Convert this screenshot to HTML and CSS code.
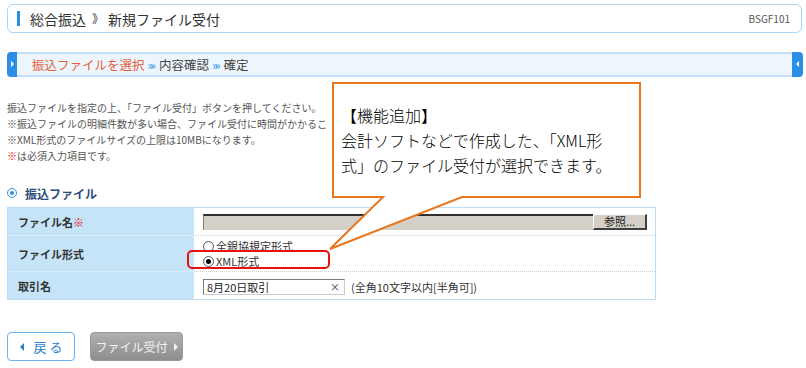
FILE: index.html
```html
<!DOCTYPE html>
<html lang="ja">
<head>
    <meta charset="UTF-8">
    <title>総合振込 新規ファイル受付</title>
    <link rel="stylesheet" href="styles.css">
</head>
<body>
    <div id="page">
        <div class="header">
            <h1><span class="bar"></span>総合振込<span class="sep">》</span>新規ファイル受付</h1>
            <span class="code">BSGF101</span>
        </div>
        <div class="steps">
            <span class="tabL"></span>
            <div class="stepMain">
                <span class="cur">振込ファイルを選択</span><span class="arr">»»</span><span>内容確認</span><span class="arr">»»</span><span>確定</span>
            </div>
            <span class="tabR"></span>
        </div>
        <div class="desc">
            <p>振込ファイルを指定の上、「ファイル受付」ボタンを押してください。</p>
            <p>※振込ファイルの明細件数が多い場合、ファイル受付に時間がかかるこ</p>
            <p>※XML形式のファイルサイズの上限は10MBになります。</p>
            <p><span class="req">※</span>は必須入力項目です。</p>
        </div>
        <h2 class="sec"><span class="secIcon"></span>振込ファイル</h2>
        <table class="form">
            <tr class="r1">
                <th>ファイル名<span class="req">※</span></th>
                <td>
                    <div class="fileBox"><span class="fileField"></span><span class="fileBtn">参照...</span></div>
                </td>
            </tr>
            <tr class="r2">
                <th>ファイル形式</th>
                <td>
                    <div class="radio"><span class="rb"></span>全銀協規定形式</div>
                    <div class="radio"><span class="rb on"></span>XML形式</div>
                </td>
            </tr>
            <tr class="r3">
                <th>取引名</th>
                <td>
                    <span class="textBox">8月20日取引<span class="clr">×</span></span><span class="note">(全角10文字以内[半角可])</span>
                </td>
            </tr>
        </table>
        <div class="btns">
            <a class="back" href="javascript:;"><span class="triL"></span>戻 る</a>
            <a class="submit" href="javascript:;">ファイル受付<span class="triR"></span></a>
        </div>

        <!-- 吹き出し -->
        <div class="mark"></div>
        <svg class="balloon" width="806" height="368" viewBox="0 0 806 368">
            <polygon points="333,83 640,83 640,197 462,197 330,249 383,197 333,197" fill="#fff" stroke="#e8771f" stroke-width="2" stroke-linejoin="miter"/>
        </svg>
        <div class="balloonText">【機能追加】<br>会計ソフトなどで作成した、「XML形<br>式」のファイル受付が選択できます。</div>
    </div>
</body>
</html>
```
FILE: styles.css
```css
body,div,h1,h2,p,table,th,td,span,a{margin: 0; padding: 0;}
a{text-decoration: none;}
body{background-color: #fff; font-family: "Noto Sans CJK JP", sans-serif; color: #333;}
#page{position: relative; width: 806px; height: 368px; overflow: hidden;}
.header{margin: 4px 4px 0 7px; height: 27px; border: 1px solid #a9d5f6; border-radius: 6px; display: flex; align-items: center; justify-content: space-between; padding: 0 11px 0 9px;}
.header h1{display: flex; align-items: center; font-size: 14px; font-weight: normal; color: #333;}
.header h1 .bar{width: 3px; height: 15px; background-color: #2b8fe3; margin-right: 10px;}
.header h1 .sep{margin: 0 4px 0 6px; font-size: 12px;}
.header .code{font-size: 10px; color: #555;}
.steps{display: flex; margin: 19px 3px 0 7px; height: 25px;}
.steps .tabL,.steps .tabR{width: 10px; background-color: #2b8de3; position: relative;}
.steps .tabL{border-radius: 4px 0 0 4px;}
.steps .tabR{width: 11px; border-radius: 0 4px 4px 0;}
.steps .tabL:after,.steps .tabR:after{content: ""; position: absolute; top: 9px; width: 0; height: 0; border-top: 3px solid transparent; border-bottom: 3px solid transparent;}
.steps .tabL:after{left: 4px; border-left: 3px solid #fff;}
.steps .tabR:after{left: 4px; border-right: 3px solid #fff;}
.steps .stepMain{flex: 1; display: flex; align-items: center; background-color: #eef6fd; border-top: 2px solid #c3e0f8; border-bottom: 2px solid #c3e0f8; padding-left: 15px; font-size: 12.5px; color: #444;}
.steps .cur{color: #e4603c;}
.steps .arr{color: #3a97e6; font-size: 12px; margin: 0 3px; letter-spacing: -3px; padding-right: 3px;}
.desc{margin-top: 23px; padding-left: 7px; width: 326px; overflow: hidden; white-space: nowrap; font-size: 10px; line-height: 16px; color: #555;}
.req{color: #e81010;}
.sec{display: flex; align-items: center; margin: 22px 0 0 7px; height: 14px; font-size: 12px; color: #2a4d7a;}
.sec .secIcon{width: 8px; height: 8px; border: 1.5px solid #2f8fe0; border-radius: 50%; margin-right: 8px; position: relative;}
.sec .secIcon:after{content: ""; position: absolute; left: 2px; top: 2px; width: 4px; height: 4px; border-radius: 50%; background-color: #2f8fe0;}
.form{margin: 7px 0 0 7px; width: 649px; border: 1px solid #b9ddf7; border-collapse: collapse; font-size: 11px;}
.form th{width: 176px; background-color: #c6e4f8; text-align: left; padding-left: 10px; font-size: 11px; color: #333; border-bottom: 1px solid #d9edfb;}
.form td{padding-left: 9px; border-bottom: 1px dotted #cfcfcf;}
.form .r1{height: 28px;}
.form .r2{height: 36px;}
.form .r3{height: 28px;}
.form .r3 th,.form .r3 td{border-bottom: 0;}
.fileBox{display: flex; width: 444px; height: 16px;}
.fileField{flex: 1; background-color: #d4d0c8; border-top: 2px solid #303030; border-left: 1px solid #808080;}
.fileBtn{width: 51px; background-color: #d4d0c8; border-top: 1px solid #fff; border-left: 1px solid #fff; border-right: 2px solid #404040; border-bottom: 2px solid #404040; font-size: 11px; line-height: 13px; text-align: center; color: #222;}
.radio{display: flex; align-items: center; height: 15px; font-size: 11px; color: #333;}
.radio .rb{width: 9px; height: 9px; border: 1px solid #555; border-radius: 50%; margin-right: 2px; position: relative; background-color: #fff;}
.radio .rb.on:after{content: ""; position: absolute; left: 2px; top: 2px; width: 5px; height: 5px; border-radius: 50%; background-color: #000;}
.textBox{display: inline-flex; align-items: center; width: 137px; height: 14px; border: 1px solid #7a7a7a; border-right-color: #ccc; border-bottom-color: #ccc; padding-left: 3px; position: relative; vertical-align: middle; color: #222;}
.textBox .clr{position: absolute; right: 4px; font-size: 10px; color: #333;}
.note{margin-left: 6px; vertical-align: middle; color: #333;}
.btns{display: flex; margin: 32px 0 0 7px;}
.btns a{display: flex; align-items: center; justify-content: center; height: 27px; border-radius: 4px;}
.btns .back{width: 66px; border: 1px solid #6ab4f2; background-color: #fff; color: #2a80d0; font-size: 13px;}
.btns .back .triL{width: 0; height: 0; border-top: 4px solid transparent; border-bottom: 4px solid transparent; border-right: 4px solid #2a80d0; margin-right: 10px;}
.btns .submit{width: 91px; margin-left: 15px; border: 1px solid #999; background: linear-gradient(#b0b0b0, #8e8e8e); color: #f2f2f2; font-size: 12px;}
.btns .submit .triR{width: 0; height: 0; border-top: 4px solid transparent; border-bottom: 4px solid transparent; border-left: 4px solid #f2f2f2; margin-left: 6px;}
.mark{position: absolute; left: 187px; top: 250px; width: 139px; height: 15px; border: 2px solid #e81010; border-radius: 5px;}
.balloon{position: absolute; left: 0; top: 0; pointer-events: none;}
.balloonText{position: absolute; left: 341px; top: 103px; font-size: 16px; font-weight: 300; line-height: 25px; color: #000; white-space: nowrap;}
```
